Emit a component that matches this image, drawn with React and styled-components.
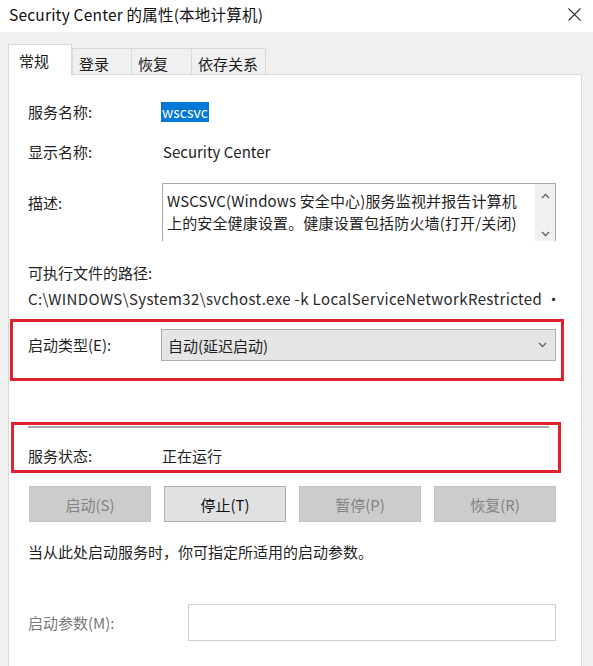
import React from 'react';
import styled, { createGlobalStyle } from 'styled-components';

const GlobalStyle = createGlobalStyle`
    body {
        margin: 0;
        font-family: "Noto Sans CJK SC", "Noto Sans", sans-serif;
        color: #1f1f1f;
    }
`

const Dialog = styled.div`
    width: 593px;
    height: 666px;
    background: #f0f0f0;
    display: flex;
    flex-direction: column;
    overflow: hidden;
`

const TitleBar = styled.div`
    height: 32px;
    background: #ffffff;
    display: flex;
    align-items: center;
    justify-content: space-between;
    padding: 0 12px 4px 9px;
    box-sizing: border-box;
    font-size: 15.5px;
    letter-spacing: 0.2px;
    color: #111;
`

const CloseIcon = styled.svg`
    width: 13px;
    height: 13px;
`

const TabStrip = styled.div`
    display: flex;
    align-items: flex-end;
    height: 31px;
    margin-top: 12px;
    padding-left: 8px;
    position: relative;
    z-index: 1;
`

const Tab = styled.div`
    width: ${p => p.$w}px;
    height: ${p => (p.$active ? 31 : 27)}px;
    box-sizing: border-box;
    border: 1px solid #d9d9d9;
    border-bottom: ${p => (p.$active ? 'none' : '1px solid #d9d9d9')};
    border-right: ${p => (p.$active || p.$last ? '1px solid #d9d9d9' : 'none')};
    background: ${p => (p.$active ? '#ffffff' : '#f0f0f0')};
    font-size: 15px;
    display: flex;
    align-items: center;
    padding-left: ${p => (p.$active ? 10 : 6)}px;
    padding-top: ${p => (p.$active ? 0 : 3)}px;
    color: #1a1a1a;
`

const Panel = styled.div`
    flex: 1;
    margin: -1px 11px 0 8px;
    background: #ffffff;
    border: 1px solid #d9d9d9;
    border-bottom: none;
    padding: 26px 25px 0 19px;
    display: flex;
    flex-direction: column;
    font-size: 15px;
`

const Row = styled.div`
    display: flex;
    align-items: ${p => p.$align || 'center'};
    min-height: 22px;
    margin-top: ${p => p.$top || 0}px;
`

const Label = styled.div`
    width: ${p => p.$w || 135}px;
    flex-shrink: 0;
    line-height: 22px;
    padding-top: ${p => p.$pt || 0}px;
    color: ${p => (p.$muted ? '#7a7a7a' : '#1f1f1f')};
`

const Value = styled.div`
    line-height: 22px;
    color: #1f1f1f;
    white-space: nowrap;
`

const Selected = styled.span`
    background: #0078d7;
    color: #ffffff;
    font-size: 14px;
    line-height: 21px;
    padding: 0 1px;
    margin-left: -2px;
`

const TextArea = styled.div`
    flex: 1;
    height: 58px;
    margin-left: -1px;
    box-sizing: border-box;
    border: 1px solid #a9a9a9;
    border-bottom: none;
    display: flex;
`

const TextBody = styled.div`
    flex: 1;
    padding: 6px 0 0 4px;
    line-height: 22px;
    font-size: 15px;
    letter-spacing: 0.15px;
    color: #1f1f1f;
`

const ScrollBar = styled.div`
    width: 20px;
    background: #f0f0f0;
    display: flex;
    flex-direction: column;
    align-items: center;
    justify-content: space-between;
    padding: 9px 0 4px;
`

const Arrow = styled.svg`
    width: 9px;
    height: 6px;
`

const PathText = styled.div`
    line-height: 22px;
    white-space: nowrap;
    letter-spacing: 0.38px;
    color: #2a2a2a;
    margin-top: 4px;
`

const Highlight = styled.div`
    border: 3px solid #e0212e;
    margin: ${p => p.$m};
    padding: ${p => p.$p};
`

const Select = styled.div`
    flex: 1;
    height: 32px;
    margin-left: -2px;
    box-sizing: border-box;
    background: #e5e5e5;
    border: 1px solid #adadad;
    display: flex;
    align-items: center;
    justify-content: space-between;
    padding: 0 8px 0 6px;
`

const Separator = styled.div`
    height: 2px;
    background: #a8a8a8;
    margin: 1px 7px 17px 0;
`

const ButtonRow = styled.div`
    display: grid;
    grid-template-columns: repeat(4, 1fr);
    gap: 13px;
    margin: 13px 0 0 1px;
`

const Button = styled.div`
    height: 36px;
    box-sizing: border-box;
    display: flex;
    align-items: center;
    justify-content: center;
    font-size: 15px;
    background: ${p => (p.$disabled ? '#cccccc' : '#e1e1e1')};
    border: 1px solid ${p => (p.$disabled ? '#c4c4c4' : '#adadad')};
    color: ${p => (p.$disabled ? '#838383' : '#111')};
`

const Hint = styled.div`
    line-height: 22px;
    margin-top: 19px;
    color: #1f1f1f;
`

const Input = styled.div`
    flex: 1;
    height: 37px;
    box-sizing: border-box;
    border: 1px solid #cfcfcf;
    background: #ffffff;
`

const Chevron = ({ up }) => (
    <Arrow viewBox="0 0 9 6">
        <polyline
            points={up ? '1,5 4.5,1.5 8,5' : '1,1 4.5,4.5 8,1'}
            fill="none"
            stroke="#606060"
            strokeWidth="1.3"
        />
    </Arrow>
)

function App() {
    return <Dialog>
        <GlobalStyle />
        <TitleBar>
            <span>Security Center 的属性(本地计算机)</span>
            <CloseIcon viewBox="0 0 13 13">
                <path d="M0.5 0.5 L12.5 12.5 M12.5 0.5 L0.5 12.5" stroke="#333" strokeWidth="1.1" />
            </CloseIcon>
        </TitleBar>

        <TabStrip>
            <Tab $active $w={64}>常规</Tab>
            <Tab $w={59}>登录</Tab>
            <Tab $w={60}>恢复</Tab>
            <Tab $w={75} $last>依存关系</Tab>
        </TabStrip>

        <Panel>
            <Row>
                <Label>服务名称:</Label>
                <Value><Selected>wscsvc</Selected></Value>
            </Row>
            <Row $top={18}>
                <Label>显示名称:</Label>
                <Value>Security Center</Value>
            </Row>
            <Row $top={20} $align="flex-start">
                <Label $pt={9}>描述:</Label>
                <TextArea>
                    <TextBody>
                        WSCSVC(Windows 安全中心)服务监视并报告计算机<br />
                        上的安全健康设置。健康设置包括防火墙(打开/关闭)
                    </TextBody>
                    <ScrollBar>
                        <Chevron up />
                        <Chevron />
                    </ScrollBar>
                </TextArea>
            </Row>
            <Row $top={21}>
                <Label $w={300}>可执行文件的路径:</Label>
            </Row>
            <PathText>C:\WINDOWS\System32\svchost.exe -k LocalServiceNetworkRestricted ·</PathText>

            <Highlight $m="9px -8px 0 -18px" $p="7px 5px 17px 15px">
                <Row>
                    <Label $w={135}>启动类型(E):</Label>
                    <Select>
                        <span>自动(延迟启动)</span>
                        <Chevron />
                    </Select>
                </Row>
            </Highlight>

            <Highlight $m="41px -5px 0 -17px" $p="0 2px 3px 14px">
                <Separator />
                <Row>
                    <Label $w={134}>服务状态:</Label>
                    <Value>正在运行</Value>
                </Row>
            </Highlight>

            <ButtonRow>
                <Button $disabled>启动(S)</Button>
                <Button>停止(T)</Button>
                <Button $disabled>暂停(P)</Button>
                <Button $disabled>恢复(R)</Button>
            </ButtonRow>

            <Hint>当从此处启动服务时，你可指定所适用的启动参数。</Hint>

            <Row $top={41}>
                <Label $w={160} $muted>启动参数(M):</Label>
                <Input />
            </Row>
        </Panel>
    </Dialog>
}

export default App;
